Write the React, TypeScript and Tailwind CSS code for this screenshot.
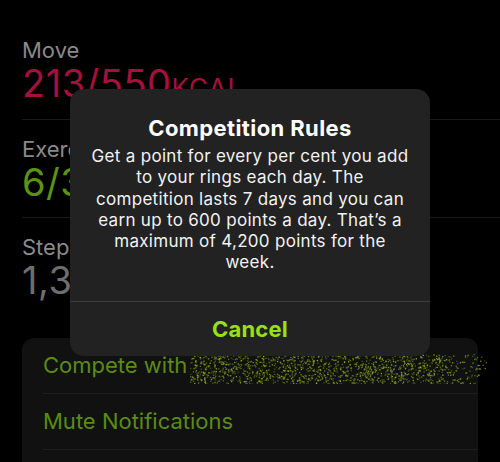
const font = { fontFamily: 'Inter, "Noto Sans", sans-serif' };

function Noise() {
  // scribbled-out name: scattered green specks
  let seed = 7;
  const rand = () => {
    seed = (seed * 16807) % 2147483647;
    return seed / 2147483647;
  };
  const dots = [];
  for (let i = 0; i < 1600; i++) {
    const x = rand() * 300;
    const y = rand() * 30;
    const fade = x > 250 ? (300 - x) / 50 : 1;
    if (rand() > fade) continue;
    dots.push(
      <rect
        key={i}
        x={x.toFixed(1)}
        y={y.toFixed(1)}
        width="1.3"
        height="1.3"
        fill={rand() > 0.5 ? '#8fae24' : '#5e7a16'}
        opacity={0.45 + rand() * 0.55}
      />
    );
  }
  return (
    <svg width="300" height="30" className="absolute left-[190px] top-[354px]">
      {dots}
    </svg>
  );
}

function Stat({ label, value, unit, color }: { label: string; value: string; unit?: string; color: string }) {
  return (
    <div className="flex flex-col">
      <span className="text-[22px] leading-[26px] text-[#8a8a8a]">{label}</span>
      <span className={`text-[38px] leading-[40px] tracking-[0.5px] ${color}`}>
        {value}
        {unit && <span className="text-[26px] tracking-[1px]">{unit}</span>}
      </span>
    </div>
  );
}

export default function App() {
  return (
    <div className="relative w-[500px] h-[462px] overflow-hidden bg-black" style={font}>
      <div className="flex flex-col pl-[22px] pt-[37px]">
        <Stat label="Move" value="213/550" unit="KCAL" color="text-[#a5113c]" />
        <div className="h-px bg-[#1a1a1a] mt-[11px]" />
        <div className="pt-[16px]">
          <Stat label="Exercise" value="6/30" unit="MIN" color="text-[#5c9412]" />
        </div>
        <div className="h-px bg-[#1a1a1a] mt-[10px]" />
        <div className="pt-[16px]">
          <Stat label="Steps" value="1,345" color="text-[#6e6e6e]" />
        </div>
        <div className="mt-[38px] mr-[22px] rounded-[12px] bg-[#111112] pl-[21px]">
          <div className="h-[55px] flex items-center text-[22px] text-[#5a8c14]">Compete with</div>
          <div className="h-px bg-[#1e1e1e]" />
          <div className="h-[55px] flex items-center text-[22px] text-[#5a8c14]">Mute Notifications</div>
          <div className="h-px bg-[#1e1e1e]" />
          <div className="h-[30px]" />
        </div>
      </div>
      <Noise />

      <div className="absolute left-[70px] top-[89px] w-[360px] h-[267px] rounded-[14px] bg-[#222222] flex flex-col">
        <div className="flex-1 flex flex-col items-center px-[8px] pt-[26px] text-center text-white">
          <h2 className="text-[22px] leading-[26px] font-bold tracking-[0.4px]">Competition Rules</h2>
          <p className="mt-[5px] text-[17px] leading-[21.3px] tracking-[0.3px] text-[#f2f2f2]">
            Get a point for every per cent you add
            <br />
            to your rings each day. The
            <br />
            competition lasts 7 days and you can
            <br />
            earn up to 600 points a day. That’s a
            <br />
            maximum of 4,200 points for the
            <br />
            week.
          </p>
        </div>
        <div className="h-px bg-[#3e3e3e]" />
        <div className="h-[54px] flex items-center justify-center text-[22px] font-bold tracking-[0.2px] text-[#97e012]">
          Cancel
        </div>
      </div>
    </div>
  );
}
